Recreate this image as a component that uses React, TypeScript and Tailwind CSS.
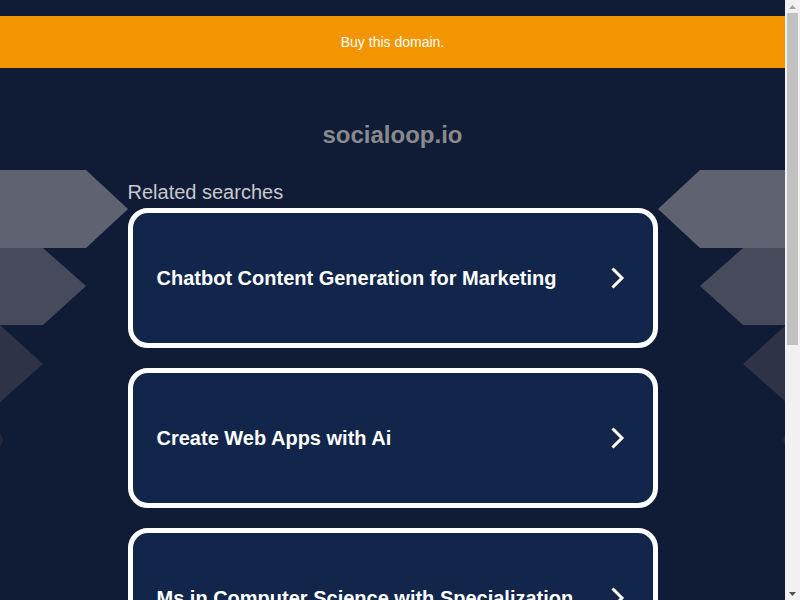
import React from "react";

const searches = [
  "Chatbot Content Generation for Marketing",
  "Create Web Apps with Ai",
  "Ms in Computer Science with Specialization",
];

// stacked arrow shapes on the sides
function Arrows({ flip = false }: { flip?: boolean }) {
  return (
    <svg width="128" height="300" viewBox="0 0 128 300" className="block shrink-0">
      <g transform={flip ? "translate(128,0) scale(-1,1)" : undefined}>
        <polygon points="0,0 86,0 128,39 86,78 0,78" fill="#5f6271" />
        <polygon points="0,78 43,78 86,116 43,155 0,155" fill="#474a5a" />
        <polygon points="0,155 43,194 0,232" fill="#2f3347" />
        <polygon points="0,262 3,270 0,278" fill="#23283c" />
      </g>
    </svg>
  );
}

function Chevron() {
  return (
    <svg width="14" height="22" viewBox="0 0 14 22" className="shrink-0">
      <polyline
        points="2.5,2.5 11,11 2.5,19.5"
        fill="none"
        stroke="#ffffff"
        strokeWidth="3"
        strokeLinecap="square"
      />
    </svg>
  );
}

function Scrollbar() {
  return (
    <div className="flex w-[15px] shrink-0 flex-col bg-[#f1f1f1]">
      <div className="flex h-[13px] items-center justify-center">
        <svg width="7" height="4" viewBox="0 0 7 4">
          <polygon points="0,4 3.5,0 7,4" fill="#a3a3a3" />
        </svg>
      </div>
      <div className="mx-[2px] h-[332px] bg-[#c1c1c1]" />
      <div className="flex-1" />
      <div className="flex h-[13px] items-center justify-center">
        <svg width="7" height="4" viewBox="0 0 7 4">
          <polygon points="0,0 7,0 3.5,4" fill="#505050" />
        </svg>
      </div>
    </div>
  );
}

export default function App() {
  return (
    <div className="flex h-screen overflow-hidden font-['Liberation_Sans',Arial,sans-serif]">
      <div className="min-w-0 flex-1 overflow-hidden bg-[#101c36]">
        {/* Banner */}
        <div className="pt-4">
          <div className="flex h-[52px] items-center justify-center bg-[#f39500] text-sm text-white">
            Buy this domain.
          </div>
        </div>

        {/* Domain name */}
        <h1 className="mt-[53px] text-center text-2xl leading-7 font-bold text-[#8a8a8d]">
          socialoop.io
        </h1>

        {/* Related searches */}
        <div className="mt-[21px] flex">
          <div className="flex flex-1 justify-end overflow-hidden">
            <Arrows />
          </div>
          <div className="w-[530px] shrink-0 pt-[10px]">
            <p className="text-xl leading-6 text-[#c8c8cc]">Related searches</p>
            <div className="mt-1 flex flex-col gap-5">
              {searches.map((s) => (
                <a
                  key={s}
                  href="#"
                  className="flex h-[140px] items-center justify-between gap-4 rounded-[20px] border-[5px] border-white bg-[#12254b] pr-7 pl-6"
                >
                  <span className="text-xl leading-6 font-bold whitespace-nowrap text-white">
                    {s}
                  </span>
                  <Chevron />
                </a>
              ))}
            </div>
          </div>
          <div className="flex flex-1 justify-start overflow-hidden">
            <Arrows flip />
          </div>
        </div>
      </div>
      <Scrollbar />
    </div>
  );
}
